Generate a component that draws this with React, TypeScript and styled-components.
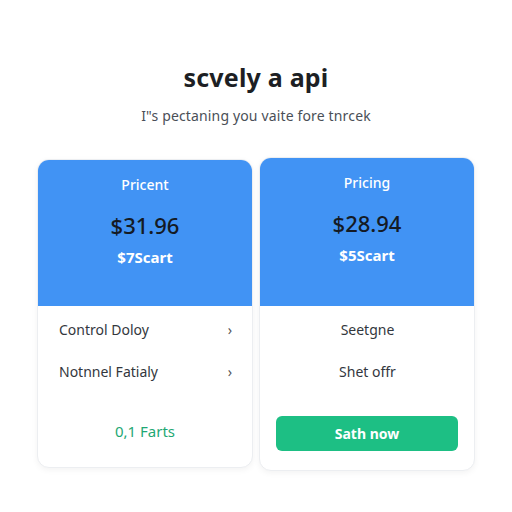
import React from "react";
import styled, { createGlobalStyle } from "styled-components";

const Global = createGlobalStyle`
  html, body { margin: 0; padding: 0; background: #ffffff; }
  body { font-family: "Noto Sans", "Open Sans", sans-serif; }
`;

const Page = styled.div`
  width: 512px;
  height: 512px;
  display: flex;
  flex-direction: column;
  align-items: center;
  box-sizing: border-box;
  padding-top: 60px;
`;

const Title = styled.h1`
  margin: 0;
  font-size: 25px;
  font-weight: 700;
  color: #1d1f24;
  line-height: 34px;
  letter-spacing: 0.2px;
`;

const Subtitle = styled.p`
  margin: 12px 0 0;
  font-size: 14px;
  color: #4a4f57;
  line-height: 20px;
  letter-spacing: 0.15px;
`;

const Cards = styled.div`
  display: flex;
  gap: 6px;
  margin-top: 33px;
  align-items: flex-start;
`;

const Card = styled.div<{ $tall?: boolean }>`
  width: 216px;
  height: ${(p) => (p.$tall ? 314 : 309)}px;
  margin-top: ${(p) => (p.$tall ? -2 : 0)}px;
  border-radius: 12px;
  background: #fff;
  border: 1px solid #eceef1;
  box-shadow: 0 2px 6px rgba(0, 0, 0, 0.05);
  overflow: hidden;
  display: flex;
  flex-direction: column;
  box-sizing: border-box;
`;

const Header = styled.div<{ $tall?: boolean }>`
  height: ${(p) => (p.$tall ? 148 : 146)}px;
  background: #4193f4;
  display: flex;
  flex-direction: column;
  align-items: center;
  padding-top: 15px;
  box-sizing: border-box;
  flex-shrink: 0;
`;

const Plan = styled.div`
  color: #ffffff;
  font-size: 14px;
  font-weight: 500;
  line-height: 20px;
`;

const Price = styled.div`
  color: #141a24;
  font-size: 22px;
  font-weight: 500;
  line-height: 30px;
  margin-top: 15px;
`;

const Sub = styled.div`
  color: #ffffff;
  font-size: 15px;
  font-weight: 700;
  line-height: 20px;
  margin-top: 7px;
`;

const Body = styled.div`
  flex: 1;
  display: flex;
  flex-direction: column;
  padding: 2px 20px 0;
`;

const Row = styled.div<{ $center?: boolean }>`
  height: 42px;
  display: flex;
  align-items: center;
  justify-content: ${(p) => (p.$center ? "center" : "space-between")};
  font-size: 14px;
  color: #33373d;
  padding: 0 0 0 1px;
`;

const Chevron = styled.span`
  font-size: 14px;
  color: #555;
`;

const Link = styled.div`
  margin-top: 29px;
  text-align: center;
  color: #1fa874;
  font-size: 15px;
`;

const Button = styled.button`
  margin-top: 24px;
  height: 35px;
  width: 182px;
  align-self: center;
  border: none;
  border-radius: 6px;
  background: #1dbf84;
  color: #fff;
  font-family: inherit;
  font-size: 14px;
  font-weight: 700;
`;

export default function App() {
  return (
    <>
      <Global />
      <Page>
        <Title>scvely a api</Title>
        <Subtitle>I"s pectaning you vaite fore tnrcek</Subtitle>
        <Cards>
          <Card>
            <Header>
              <Plan>Pricent</Plan>
              <Price>$31.96</Price>
              <Sub>$7Scart</Sub>
            </Header>
            <Body>
              <Row>
                <span>Control Doloy</span>
                <Chevron>›</Chevron>
              </Row>
              <Row>
                <span>Notnnel Fatialy</span>
                <Chevron>›</Chevron>
              </Row>
              <Link>0,1 Farts</Link>
            </Body>
          </Card>
          <Card $tall>
            <Header $tall>
              <Plan>Pricing</Plan>
              <Price>$28.94</Price>
              <Sub>$5Scart</Sub>
            </Header>
            <Body>
              <Row $center>Seetgne</Row>
              <Row $center>Shet offr</Row>
              <Button>Sath now</Button>
            </Body>
          </Card>
        </Cards>
      </Page>
    </>
  );
}
